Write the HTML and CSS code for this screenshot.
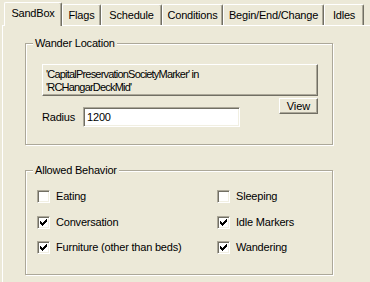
FILE: index.html
```html
<!DOCTYPE html>
<html lang="en">
<head>
    <meta charset="UTF-8">
    <title>SandBox</title>
    <link rel="stylesheet" href="styles.css">
</head>
<body>
    <div class="tabs">
        <div class="tab active w-sandbox">SandBox</div>
        <div class="tab w-flags">Flags</div>
        <div class="tab w-schedule">Schedule</div>
        <div class="tab w-conditions">Conditions</div>
        <div class="tab w-begin">Begin/End/Change</div>
        <div class="tab w-idles">Idles</div>
    </div>

    <div class="panel">
        <fieldset class="group wander">
            <legend>Wander Location</legend>
            <div class="group-body wander-body">
                <button class="btn marker">'CapitalPreservationSocietyMarker' in<br>'RCHangarDeckMid'</button>
                <div class="radius-row">
                    <div class="radius">
                        <span class="radius-label">Radius</span>
                        <div class="input">1200</div>
                    </div>
                    <button class="btn view">View</button>
                </div>
            </div>
        </fieldset>

        <fieldset class="group behavior">
            <legend>Allowed Behavior</legend>
            <div class="group-body checks">
                <div class="check"><span class="box"></span>Eating</div>
                <div class="check"><span class="box"></span>Sleeping</div>
                <div class="check"><span class="box"><svg class="tick" width="7" height="7" viewBox="0 0 7 7"><path d="M0 2h1v3h-1zM1 3h1v3h-1zM2 4h1v3h-1zM3 3h1v3h-1zM4 2h1v3h-1zM5 1h1v3h-1zM6 0h1v3h-1z"/></svg></span>Conversation</div>
                <div class="check"><span class="box"><svg class="tick" width="7" height="7" viewBox="0 0 7 7"><path d="M0 2h1v3h-1zM1 3h1v3h-1zM2 4h1v3h-1zM3 3h1v3h-1zM4 2h1v3h-1zM5 1h1v3h-1zM6 0h1v3h-1z"/></svg></span>Idle Markers</div>
                <div class="check"><span class="box"><svg class="tick" width="7" height="7" viewBox="0 0 7 7"><path d="M0 2h1v3h-1zM1 3h1v3h-1zM2 4h1v3h-1zM3 3h1v3h-1zM4 2h1v3h-1zM5 1h1v3h-1zM6 0h1v3h-1z"/></svg></span>Furniture (other than beds)</div>
                <div class="check"><span class="box"><svg class="tick" width="7" height="7" viewBox="0 0 7 7"><path d="M0 2h1v3h-1zM1 3h1v3h-1zM2 4h1v3h-1zM3 3h1v3h-1zM4 2h1v3h-1zM5 1h1v3h-1zM6 0h1v3h-1z"/></svg></span>Wandering</div>
            </div>
        </fieldset>
    </div>
</body>
</html>
```

FILE: styles.css
```css
* {
    margin: 0;
    padding: 0;
    box-sizing: border-box;
}

html, body {
    height: 100%;
}

body {
    font-family: 'Liberation Sans', Arial, sans-serif;
    font-size: 11px;
    line-height: 13px;
    letter-spacing: -0.2px;
    color: #000;
    background-color: #ece9d8;
    padding: 2px 0 0 2px;
    overflow: hidden;
    display: flex;
    flex-direction: column;
}

/* tab strip */
.tabs {
    display: flex;
    align-items: flex-end;
    height: 23px;
    padding-left: 2px;
    flex: none;
}

.tab {
    height: 21px;
    padding-top: 4px;
    text-align: center;
    border-left: 1px solid #fff;
    border-top: 1px solid #fff;
    border-right: 1px solid #716f64;
    box-shadow: inset -1px 0 0 #aca899;
    border-radius: 2px 2px 0 0;
    white-space: nowrap;
}

.tab.active {
    height: 24px;
    padding-top: 4px;
    margin-bottom: -1px;
    background-color: #ece9d8;
    position: relative;
    z-index: 2;
}

.w-sandbox { width: 58px; }
.w-flags { width: 39px; }
.w-schedule { width: 61px; }
.w-conditions { width: 61px; }
.w-begin { width: 101px; }
.w-idles { width: 40px; }

/* tab page */
.panel {
    flex: 1;
    border-left: 1px solid #fff;
    border-top: 1px solid #fff;
    padding: 11px 0 0 22px;
}

.group {
    width: 308px;
    border: 1px solid #aca899;
    box-shadow: inset 1px 1px 0 #fff, 1px 1px 0 #fff;
    min-width: 0;
}

.group legend {
    margin-left: 7px;
    padding: 0 2px;
    background-color: #ece9d8;
    line-height: 13px;
}

.wander-body {
    padding: 14px 0 17px 16px;
}

.btn {
    font: inherit;
    color: #000;
    background-color: #ece9d8;
    border: 1px solid;
    border-color: #fff #716f64 #716f64 #fff;
    box-shadow: inset -1px -1px 0 #aca899;
}

.marker {
    display: block;
    width: 276px;
    height: 32px;
    padding: 2px 0 0 3px;
    text-align: left;
    letter-spacing: -0.8px;
}

.radius-row {
    display: flex;
    justify-content: space-between;
    align-items: flex-start;
    width: 276px;
    padding-top: 2px;
}

.radius {
    display: flex;
    align-items: center;
    gap: 8px;
    margin-top: 9px;
}

.input {
    width: 157px;
    height: 20px;
    padding: 3px 0 0 3px;
    background-color: #fff;
    border: 1px solid;
    border-color: #aca899 #fff #fff #aca899;
    box-shadow: inset 1px 1px 0 #716f64, inset -1px -1px 0 #f1efe2;
}

.view {
    width: 39px;
    height: 16px;
    padding-top: 0;
    text-align: center;
}

.behavior {
    margin-top: 19px;
}

.checks {
    display: grid;
    grid-template-columns: 180px 1fr;
    grid-auto-rows: 13px;
    row-gap: 12.5px;
    padding: 13px 0 20px 11px;
}

.check {
    display: flex;
    align-items: center;
    gap: 6px;
    white-space: nowrap;
}

.box {
    flex: none;
    width: 13px;
    height: 13px;
    background-color: #fff;
    border: 1px solid;
    border-color: #aca899 #fff #fff #aca899;
    box-shadow: inset 1px 1px 0 #716f64, inset -1px -1px 0 #f1efe2;
    display: flex;
    align-items: center;
    justify-content: center;
}

.tick {
    display: block;
    shape-rendering: crispEdges;
}
```
